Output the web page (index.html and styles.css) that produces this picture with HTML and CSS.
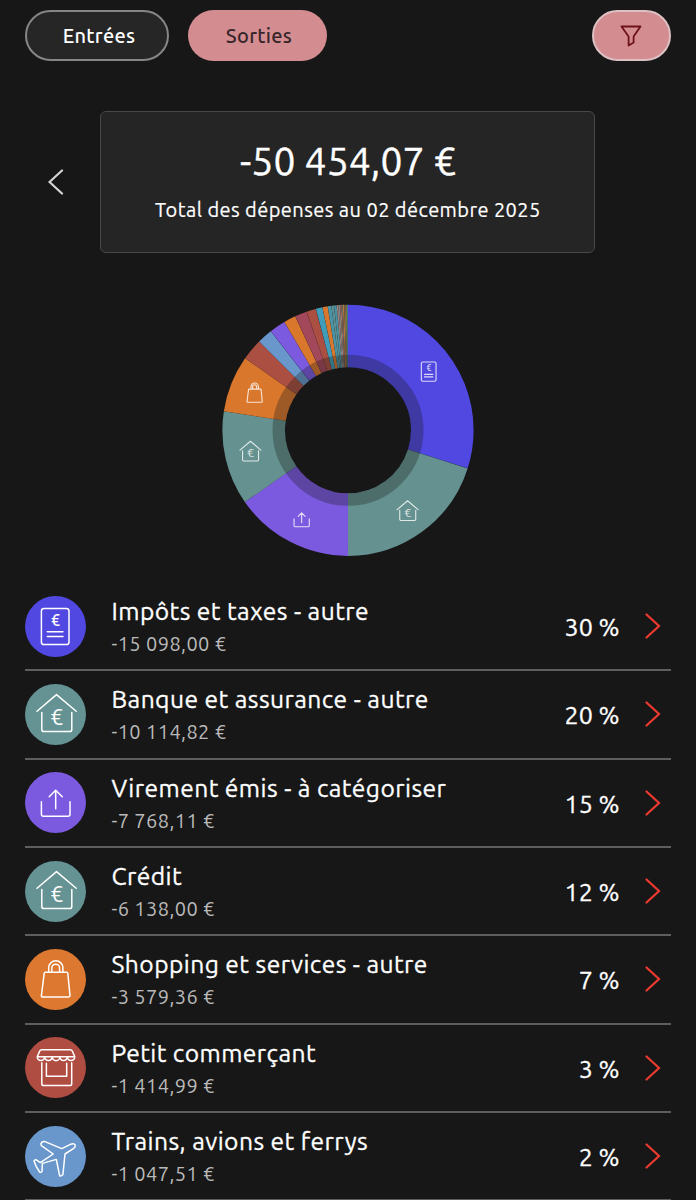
FILE: index.html
```html
<!DOCTYPE html>
<html lang="fr">
<head>
    <meta charset="UTF-8">
    <meta name="viewport" content="width=device-width, initial-scale=1.0">
    <title>Dépenses</title>
    <link rel="stylesheet" href="styles.css">
</head>
<body>
    <svg class="sprite" aria-hidden="true">
        <symbol id="icon-doc" viewBox="0 0 61 61">
            <rect x="16.4" y="12.6" width="27.6" height="36" rx="2.6"/>
            <text class="euro euro-bold" x="30.4" y="30.4">€</text>
            <path d="M22.3 35.7H38M22.3 40.5H38"/>
        </symbol>
        <symbol id="icon-house" viewBox="0 0 61 61">
            <path d="M12 27.3L31.5 10.6L51.2 27.3M16.8 28.5V45.5Q16.8 47.6 18.9 47.6H44.7Q46.8 47.6 46.8 45.5V28.5"/>
            <text class="euro euro-big" x="31.7" y="40.5">€</text>
        </symbol>
        <symbol id="icon-upload" viewBox="0 0 61 61">
            <path d="M16.4 29.7V42.3Q16.4 44.3 18.4 44.3H43Q45 44.3 45 42.3V29.7M30.7 36.7V18.3M24.2 24.8L30.7 18.3L37.3 24.8"/>
        </symbol>
        <symbol id="icon-bag" viewBox="0 0 61 61">
            <path d="M20.2 23.3H41.8Q42.7 23.3 42.8 24.3L45 46.6Q45 48 43.6 48H17.8Q16.3 48 16.4 46.6L19.2 24.3Q19.3 23.3 20.2 23.3ZM23.7 23.3V18.9A7.1 7.1 0 0 1 37.9 18.9V23.3M26.8 23.3V19.1A3.9 3.9 0 0 1 34.6 19.1V23.3"/>
        </symbol>
        <symbol id="icon-shop" viewBox="0 0 61 61">
            <path d="M12.2 19.7L14.8 13.9Q15.3 12.7 16.5 12.7H45.5Q46.7 12.7 47.2 13.9L49.8 19.7ZM12.2 19.7A3.76 4 0 0 0 19.7 19.7A3.76 4 0 0 0 27.2 19.7A3.76 4 0 0 0 34.8 19.7A3.76 4 0 0 0 42.3 19.7A3.76 4 0 0 0 49.8 19.7M16.8 25.7V46.7Q16.8 48.6 18.8 48.6H44.7Q46.7 48.6 46.7 46.7V25.7M21.4 26.3V39.3H41.7V26.3"/>
        </symbol>
        <symbol id="icon-plane" viewBox="0 0 61 61">
            <path d="M16 17.8Q16.6 15.2 19.4 15.4L36.8 22.6L45.8 18.2Q49.4 17.2 50.2 19Q50.6 20.9 49 22.2L40 28L37.9 48.5Q36.2 50.6 34.7 49.8L31.3 33.4L17.4 37.4L17 45.6Q15.8 47 14.6 46L11.3 40.6L9 35Q9.6 33.4 11.2 33.8L15.4 36.6L28.2 28L16.4 19.6Q15.7 18.9 16 17.8Z"/>
        </symbol>
    </svg>

    <header class="tabs">
        <button class="tab">Entrées</button>
        <button class="tab tab-active">Sorties</button>
        <button class="filter" aria-label="Filtrer">
            <svg width="24" height="24" viewBox="0 0 24 24"><path d="M2.5 2.5H21.5L14.6 12.6V18.6L9.6 21.6V12.6Z"/></svg>
        </button>
    </header>

    <section class="summary">
        <button class="prev" aria-label="Précédent">
            <svg width="16" height="26" viewBox="0 0 16 26"><path d="M14 1.5L1.5 13L14 24.5"/></svg>
        </button>
        <div class="total">
            <div class="total-amount">-50 454,07 €</div>
            <div class="total-label">Total des dépenses au 02 décembre 2025</div>
        </div>
    </section>

    <div class="chart">
        <svg width="252" height="252" viewBox="-126 -126.3 252 252">
            <g id="slices" class="slices"></g>
            <circle class="inner-ring" r="69.2"/>
            <use class="icon" href="#icon-doc" x="64.6" y="-75" width="32.5" height="32.5"/>
            <use class="icon" href="#icon-house" x="42.8" y="64.8" width="32.5" height="32.5"/>
            <use class="icon" href="#icon-upload" x="-62.7" y="72.8" width="32.5" height="32.5"/>
            <use class="icon" href="#icon-house" x="-114.4" y="5.3" width="32.5" height="32.5"/>
            <use class="icon" href="#icon-bag" x="-109.7" y="-53.6" width="32.5" height="32.5"/>
        </svg>
    </div>

    <ul class="list">
        <li class="row">
            <svg class="badge indigo icon"><use href="#icon-doc"/></svg>
            <div class="text"><div class="name">Impôts et taxes - autre</div><div class="amount">-15 098,00 €</div></div>
            <div class="percent">30 %</div>
            <svg class="chevron" viewBox="0 0 16 26"><path d="M1.5 1.5L14 13L1.5 24.5"/></svg>
        </li>
        <li class="row">
            <svg class="badge teal icon"><use href="#icon-house"/></svg>
            <div class="text"><div class="name">Banque et assurance - autre</div><div class="amount">-10 114,82 €</div></div>
            <div class="percent">20 %</div>
            <svg class="chevron" viewBox="0 0 16 26"><path d="M1.5 1.5L14 13L1.5 24.5"/></svg>
        </li>
        <li class="row">
            <svg class="badge violet icon"><use href="#icon-upload"/></svg>
            <div class="text"><div class="name">Virement émis - à catégoriser</div><div class="amount">-7 768,11 €</div></div>
            <div class="percent">15 %</div>
            <svg class="chevron" viewBox="0 0 16 26"><path d="M1.5 1.5L14 13L1.5 24.5"/></svg>
        </li>
        <li class="row">
            <svg class="badge teal icon"><use href="#icon-house"/></svg>
            <div class="text"><div class="name">Crédit</div><div class="amount">-6 138,00 €</div></div>
            <div class="percent">12 %</div>
            <svg class="chevron" viewBox="0 0 16 26"><path d="M1.5 1.5L14 13L1.5 24.5"/></svg>
        </li>
        <li class="row">
            <svg class="badge orange icon"><use href="#icon-bag"/></svg>
            <div class="text"><div class="name">Shopping et services - autre</div><div class="amount">-3 579,36 €</div></div>
            <div class="percent">7 %</div>
            <svg class="chevron" viewBox="0 0 16 26"><path d="M1.5 1.5L14 13L1.5 24.5"/></svg>
        </li>
        <li class="row">
            <svg class="badge red icon"><use href="#icon-shop"/></svg>
            <div class="text"><div class="name">Petit commerçant</div><div class="amount">-1 414,99 €</div></div>
            <div class="percent">3 %</div>
            <svg class="chevron" viewBox="0 0 16 26"><path d="M1.5 1.5L14 13L1.5 24.5"/></svg>
        </li>
        <li class="row">
            <svg class="badge blue icon"><use href="#icon-plane"/></svg>
            <div class="text"><div class="name">Trains, avions et ferrys</div><div class="amount">-1 047,51 €</div></div>
            <div class="percent">2 %</div>
            <svg class="chevron" viewBox="0 0 16 26"><path d="M1.5 1.5L14 13L1.5 24.5"/></svg>
        </li>
    </ul>

    <script src="chart.js"></script>
</body>
</html>
```
FILE: styles.css
```css
* {
    box-sizing: border-box;
}

body {
    margin: 0;
    height: 1200px;
    overflow: hidden;
    padding: 10px 25px 0;
    background-color: #171717;
    color: #fff;
    font-family: Ubuntu, "Noto Sans", sans-serif;
}

button {
    padding: 0;
    border: none;
    background: none;
    font-family: inherit;
}

.sprite {
    display: none;
}

.tabs {
    display: flex;
    height: 51px;
}

.tab,
.filter {
    height: 51px;
    border-radius: 26px;
}

.tab {
    width: 144px;
    margin-right: 19px;
    padding-left: 4px;
    border: 2px solid #868686;
    background-color: #262626;
    color: #fff;
    font-size: 20px;
    font-weight: 500;
    letter-spacing: 0.3px;
}

.tab-active {
    width: 139px;
    padding-left: 3px;
    border: none;
    background-color: #d38d91;
    color: #372629;
}

.filter {
    display: flex;
    align-items: center;
    justify-content: center;
    width: 79px;
    margin-left: auto;
    padding: 0 2px 0 0;
    border: 2px solid #dcc0c3;
    background-color: #d38d91;
}

.filter path {
    fill: none;
    stroke: #6d1218;
    stroke-width: 1.8;
    stroke-linejoin: round;
}

.summary {
    display: flex;
    align-items: center;
    margin-top: 50px;
}

.prev {
    width: 75.4px;
    padding-right: 13px;
    line-height: 0;
}

.prev path,
.chevron path {
    fill: none;
    stroke: #d6d6d6;
    stroke-width: 2.2;
    stroke-linecap: round;
}

.total {
    width: 495px;
    height: 142px;
    padding-top: 24px;
    border: 1.5px solid #48484b;
    border-radius: 6px;
    background-color: #252525;
    text-align: center;
}

.total-amount {
    font-size: 39px;
    line-height: 50px;
    letter-spacing: 0.1px;
    -webkit-text-stroke: 0.4px #fff;
}

.total-label {
    margin-top: 10px;
    font-size: 20px;
    line-height: 28px;
    letter-spacing: 0.43px;
    -webkit-text-stroke: 0.2px #fff;
}

.chart {
    margin-top: 51px;
    height: 252px;
    text-align: center;
    line-height: 0;
}

.slices circle {
    fill: none;
    stroke-width: 62.6;
}

.inner-ring {
    fill: none;
    stroke: rgba(23, 23, 23, 0.3);
    stroke-width: 12.6;
}

.icon {
    fill: none;
    stroke: #fff;
    stroke-width: 1.5;
    stroke-linecap: round;
    stroke-linejoin: round;
}

.chart .icon {
    stroke-width: 2.1;
    opacity: 0.8;
}

.euro {
    fill: #fff;
    stroke: none;
    font-family: Ubuntu, "Noto Sans", sans-serif;
    text-anchor: middle;
}

.euro-bold {
    font-size: 16px;
    font-weight: 500;
}

.euro-big {
    font-size: 22.5px;
}

.list {
    margin: 27px 0 0;
    padding: 0;
    list-style: none;
}

.row {
    display: flex;
    align-items: center;
    height: 88.33px;
    border-bottom: 2px solid #5e5e5e;
}

.badge {
    flex: none;
    width: 61px;
    height: 61px;
    border-radius: 50%;
}

.indigo { background-color: #5048e0; }
.teal { background-color: #659293; }
.violet { background-color: #7b5ae0; }
.orange { background-color: #dc782f; }
.red { background-color: #b04d43; }
.blue { background-color: #6996cb; }

.text {
    flex: 1;
    margin-left: 25.5px;
}

.name {
    padding-top: 0.8px;
    font-size: 24.6px;
    line-height: 32px;
    letter-spacing: 0.44px;
    white-space: nowrap;
    -webkit-text-stroke: 0.3px #fff;
}

.amount {
    color: #bababa;
    font-size: 20px;
    line-height: 28px;
    margin-top: 3.2px;
    letter-spacing: 0.4px;
}

.percent {
    font-size: 25px;
    padding-top: 2px;
    -webkit-text-stroke: 0.3px #fff;
}

.chevron {
    width: 16px;
    height: 26px;
    margin: 0 10px 0 25.5px;
}

.chevron path {
    stroke: #ee3a30;
}
```
FILE: chart.js
```js
// [end angle in degrees, colour], clockwise from the top
const slices = [
    [107.7, '#5048e0'],
    [180, '#659290'],
    [235.2, '#7b5ae0'],
    [278.7, '#659290'],
    [305, '#d9772d'],
    [315, '#aa4f41'],
    [322.1, '#6996cb'],
    [329.6, '#7b5ae0'],
    [335.2, '#d9772d'],
    [340.8, '#a3485a'],
    [345.2, '#aa4f41'],
    [348.3, '#409cb8'],
    [350.7, '#d9772d'],
    [352.4, '#4a94a6'],
    [353.6, '#5d8f92'],
    [354.8, '#4792a4'],
    [355.6, '#a08078'],
    [356.4, '#7b8588'],
    [357.0, '#b0705a'],
    [357.6, '#6a6a70'],
    [358.3, '#b47a3a'],
    [359.0, '#806a50'],
    [359.5, '#84823f'],
    [360, '#4a8290']
];

const group = document.getElementById('slices');
let start = 0;

slices.forEach(([end, color]) => {
    const circle = document.createElementNS('http://www.w3.org/2000/svg', 'circle');
    circle.setAttribute('r', 94.3);
    circle.setAttribute('pathLength', 360);
    circle.setAttribute('stroke', color);
    circle.setAttribute('stroke-dasharray', `${end - start} 360`);
    circle.setAttribute('transform', `rotate(${start - 90})`);
    group.appendChild(circle);
    start = end;
});
```
